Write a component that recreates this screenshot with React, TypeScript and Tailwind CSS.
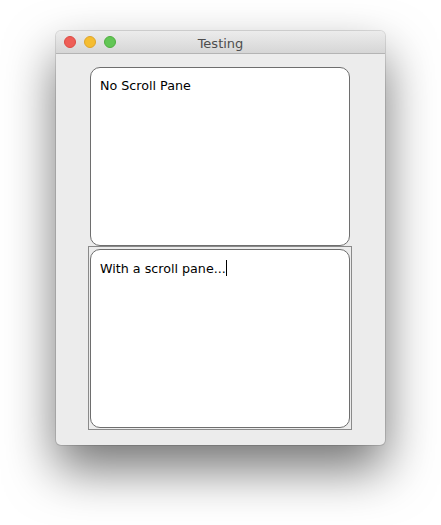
import React from "react";

export default function App() {
  const font = { fontFamily: '"DejaVu Sans", "Liberation Sans", sans-serif' };
  return (
    <div className="w-[441px] h-[525px] bg-white pl-[56px] pt-[31px]" style={font}>
      <div className="w-[329px] h-[414px] rounded-[5px] bg-[#ececec] flex flex-col overflow-hidden shadow-[0_24px_50px_rgba(0,0,0,0.55),0_0_0_1px_rgba(0,0,0,0.12)]">
        <div className="relative h-[23px] shrink-0 bg-gradient-to-b from-[#ececec] to-[#d6d6d6] border-b border-[#b4b4b4] flex items-center">
          <div className="flex items-center gap-[8px] pl-[8px]">
            <span className="w-[12px] h-[12px] rounded-full bg-[#ee5e57] border border-[#dc4a42]" />
            <span className="w-[12px] h-[12px] rounded-full bg-[#f5bd31] border border-[#dea42a]" />
            <span className="w-[12px] h-[12px] rounded-full bg-[#62c655] border border-[#4fae3f]" />
          </div>
          <div className="absolute inset-0 flex items-center justify-center text-[13px] text-[#4d4d4d] leading-none pt-[2px]">
            Testing
          </div>
        </div>
        <div className="flex flex-col pl-[32px] pt-[13px]">
          <div className="ml-[2px] w-[260px] h-[179px] bg-white border border-[#6e6e6e] rounded-[10px] px-[9px] pt-[10px] text-[12.7px] text-black leading-[16px]">
            No Scroll Pane
          </div>
          <div className="w-[264px] h-[184px] border border-[#8a8a8a] p-[1px] pt-[2px]">
            <div className="w-full h-full bg-white border border-[#6e6e6e] rounded-[10px] px-[9px] pt-[10px] text-[12.7px] text-black leading-[16px]">
              With a scroll pane...
              <span className="inline-block w-[1px] h-[16px] bg-black align-[-3px]" />
            </div>
          </div>
        </div>
      </div>
    </div>
  );
}
